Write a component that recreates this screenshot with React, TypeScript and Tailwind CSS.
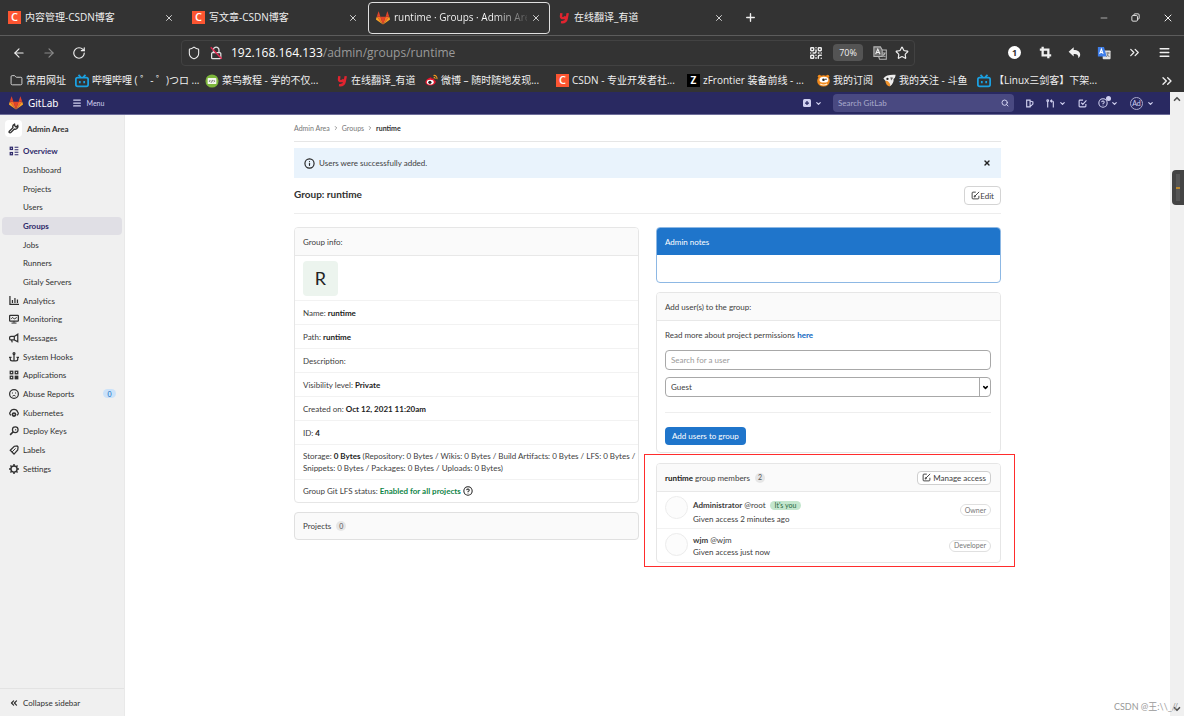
import type { ReactNode } from 'react'
import {
  ArrowLeft,
  ArrowRight,
  ChevronDown,
  ChevronRight,
  ChevronUp,
  ChevronsLeft,
  ChevronsRight,
  CircleHelp,
  Folder,
  Info,
  Menu,
  Minus,
  Plus,
  QrCode,
  RotateCw,
  Search,
  Shield,
  Star,
  X,
} from 'lucide-react'

/* ---------- icons ---------- */

interface IconProps {
  className?: string
}

function Svg({ className = 'size-[10px]', children }: IconProps & { children: ReactNode }) {
  return (
    <svg
      viewBox="0 0 16 16"
      className={`shrink-0 ${className}`}
      fill="none"
      stroke="currentColor"
      strokeWidth="2"
      aria-hidden="true"
    >
      {children}
    </svg>
  )
}

function TanukiIcon({ className }: IconProps) {
  return (
    <svg viewBox="0 0 36 34" className={`shrink-0 ${className}`} aria-hidden="true">
      <path fill="#e24329" d="M18 34 24.600 13.500H11.400z" />
      <path fill="#fc6d26" d="M18 34 11.400 13.500H2z" />
      <path fill="#fca326" d="M2 13.500.1 19.700a1.400 1.400 0 0 0 .5 1.500L18 34z" />
      <path fill="#e24329" d="M2 13.500h9.400L7.400 1c-.2-.6-1.100-.6-1.300 0z" />
      <path fill="#fc6d26" d="M18 34 24.600 13.500H34z" />
      <path fill="#fca326" d="m34 13.500 1.900 6.200a1.400 1.400 0 0 1-.5 1.500L18 34z" />
      <path fill="#e24329" d="M34 13.500h-9.400L28.600 1c.2-.6 1.100-.6 1.300 0z" />
    </svg>
  )
}

function BiliIcon() {
  return (
    <svg viewBox="0 0 16 16" className="size-[14px] shrink-0" fill="none" stroke="#1ba1e2" strokeWidth="2" aria-hidden="true">
      <rect x="1" y="4" width="14" height="10" rx="2" />
      <path d="m4 1 2.500 2.500M12 1 9.500 3.500M5.500 8v2.500M10.500 8v2.500" />
    </svg>
  )
}

function CsdnIcon() {
  return (
    <span className="flex size-[13px] shrink-0 items-center justify-center bg-[#fc5531] text-[11px] font-semibold text-white">
      C
    </span>
  )
}

function YoudaoIcon() {
  return (
    <svg viewBox="0 0 16 16" className="size-[12px] shrink-0" fill="none" stroke="#e0242f" strokeWidth="3.200" aria-hidden="true">
      <path d="M4.500 1.500 4 5.500c-.3 3.500 4.500 3.500 6.500.5M13 1.500 11.500 9c-.8 4-3.500 5-7.500 4.500" />
    </svg>
  )
}

function RunoobIcon() {
  return (
    <svg viewBox="0 0 16 16" className="size-[14px] shrink-0" aria-hidden="true">
      <circle cx="8" cy="8" r="7.500" fill="#7db73c" />
      <rect x="3" y="4.500" width="10" height="7" rx="1" fill="#f4f8ee" />
      <path d="M6 7 5 8.200l1 1.200M10 7l1 1.200-1 1.200M8.500 6.800l-1 3" stroke="#555" fill="none" />
    </svg>
  )
}

function WeiboIcon() {
  return (
    <svg viewBox="0 0 16 16" className="size-[13px] shrink-0" aria-hidden="true">
      <path fill="#e6162d" d="M6 4.500c1-.6 2.300-.4 2.200 1.300 1.800-.7 3.800-.3 3.200 1.600 1.500.5 2.100 1.500 1.800 2.700-.5 2.300-3.400 4-6.700 4S.5 12.600.5 10.200C.5 8 3.500 5.200 6 4.500z" />
      <ellipse cx="6.500" cy="10" rx="4.200" ry="3" fill="#fff" />
      <circle cx="6" cy="10.200" r="2" fill="#222" />
      <path d="M10.500 1.800c2.800-.5 4.800 1.700 4.200 4.500M10.700 4.200c1.200-.2 1.900.7 1.700 1.800" stroke="#f59a1b" strokeWidth="1.300" fill="none" />
    </svg>
  )
}

function SubscribeIcon() {
  return (
    <svg viewBox="0 0 16 16" className="size-[13px] shrink-0" aria-hidden="true">
      <circle cx="3" cy="2.800" r="2" fill="#f28a1c" />
      <circle cx="13" cy="2.800" r="2" fill="#f28a1c" />
      <ellipse cx="8" cy="8.500" rx="7.800" ry="7" fill="#f28a1c" />
      <ellipse cx="8.500" cy="7" rx="5.500" ry="3.600" fill="#fff" />
      <circle cx="8" cy="7" r="1.600" fill="#222" />
      <circle cx="11" cy="6.500" r="1" fill="#222" />
      <path d="M4 12.300c2.500 1.500 6 1.500 8.500 0" stroke="#fff3df" strokeWidth="1.400" fill="none" />
    </svg>
  )
}

function DouyuIcon() {
  return (
    <svg viewBox="0 0 16 16" className="size-[13px] shrink-0" aria-hidden="true">
      <path d="M.5 5.500C3 1.500 9 .5 15.500 1c-.5 2 0 3.500-2.500 5 .5 3-1 6.500-4.500 9C7.500 13 5 12 3.500 9z" fill="#eee" />
      <path d="M3 8.500c2-1 5 1 6 5l-1 2c-3-1-5-4-5-7z" fill="#f0932b" />
      <circle cx="5.500" cy="6" r="1.400" fill="#222" />
      <path d="m9 4 3.500.5L10 8z" fill="#666" />
    </svg>
  )
}

function InsecureLockIcon() {
  return (
    <svg viewBox="0 0 16 16" className="size-[14px] shrink-0" fill="none" stroke="#e4e4e4" strokeWidth="1.400" aria-hidden="true">
      <rect x="3" y="7.500" width="10.500" height="7" rx="1.200" />
      <path d="M5 7.500V4.500a3.200 3.200 0 0 1 6.400 0v3" />
      <path d="m2 1.500 12.500 13" stroke="#e22850" strokeWidth="1.600" />
    </svg>
  )
}

function TranslateIcon() {
  return (
    <svg viewBox="0 0 16 16" className="size-[14px] shrink-0" fill="none" aria-hidden="true">
      <rect x="6.500" y="5" width="9" height="10" rx="1" fill="#e2e2e2" />
      <path d="M1 1h7l3 11H1z" fill="#3f7ee8" />
      <path d="m3 9 2-5.500L7 9M3.600 7.300h2.800" stroke="#fff" strokeWidth="1.200" />
      <path d="M10.500 8h4M12.500 7v1.200c0 2-1 3.500-2 4.300M11.500 9.500l2.500 3" stroke="#666" strokeWidth=".9" />
    </svg>
  )
}

function PageTranslateIcon() {
  return (
    <svg viewBox="0 0 16 16" className="size-[14px] shrink-0" fill="none" stroke="#b8b8b8" strokeWidth="1.200" aria-hidden="true">
      <path d="M1 1h7.500l2 3.500V12H1z" fill="#6a6a6a" />
      <path d="M10.500 4.500h4.700v10.700H7.500L6.500 12" />
      <path d="m3 9.500 2.500-6L8 9.500M4 7.500h3" stroke="#f0f0f0" />
      <path d="M11 8h3.500M13.500 8c-.3 2-1.300 3.500-2.500 4.500M11.500 9.500l2.500 3" />
    </svg>
  )
}

function CropIcon() {
  return (
    <Svg className="size-[13px]">
      <path d="M4.500 1v10.500H15M1 4.500h10.500V15" strokeWidth="2.800" />
    </Svg>
  )
}

function ReplyIcon() {
  return (
    <svg viewBox="0 0 16 16" className="size-[13px] shrink-0" fill="currentColor" aria-hidden="true">
      <path d="M7 1.500v3.300c5 0 8 2.500 8 5.700 0 2-1 3.600-2.500 4.500.8-3.500-1-5.300-5.500-5.300V13L.8 7.200z" />
    </svg>
  )
}

function RestoreIcon() {
  return (
    <Svg className="size-[9px]">
      <rect x="1.500" y="4.500" width="10" height="10" rx="2" strokeWidth="1.600" />
      <path d="M5 4V3.500a2 2 0 0 1 2-2h5.500a2 2 0 0 1 2 2V9a2 2 0 0 1-2 2" strokeWidth="1.600" />
    </Svg>
  )
}

function EditIcon({ className }: IconProps) {
  return (
    <Svg className={className}>
      <path d="M8.500 2H3.500A1.500 1.500 0 0 0 2 3.500v9A1.500 1.500 0 0 0 3.500 14h9a1.500 1.500 0 0 0 1.500-1.500V8.500" strokeWidth="1.700" />
      <path d="M6.500 9.500 14.500 1.500M5.500 10.800l.8-2.600 1.700 1.700z" strokeWidth="1.700" />
    </Svg>
  )
}

function WrenchIcon() {
  return (
    <Svg className="size-[11px]">
      <path d="M9.500 1.800a4 4 0 0 0-2.300 5L2 12a1.300 1.300 0 0 0 2 2l5.200-5.200a4 4 0 0 0 5-5L11.800 6l-1.800-1.800z" />
    </Svg>
  )
}

function OverviewIcon() {
  return (
    <Svg>
      <rect x="2" y="2" width="3.500" height="3.500" />
      <rect x="2" y="10.500" width="3.500" height="3.500" />
      <path d="M9 2h6M9 6h6M9 10h6M9 14h6" strokeWidth="1.800" />
    </Svg>
  )
}

function ChartIcon() {
  return (
    <Svg>
      <path d="M1.500 0v13.500H16M5.500 6.500V11M9.500 3v8M13.500 5.500V11" />
    </Svg>
  )
}

function MonitorIcon() {
  return (
    <Svg>
      <rect x="1" y="2" width="14" height="9.500" rx="1" />
      <path d="M8 11v3M4 14.500h8M3.500 7.500 6 5.500 8.500 8 12.500 5.500" strokeWidth="1.600" />
    </Svg>
  )
}

function BullhornIcon() {
  return (
    <Svg>
      <path d="M14 2v12L8.500 11H3a2 2 0 0 1-2-2V7.500a2 2 0 0 1 2-2h5.500zM8.500 5.500V11M4 11l1.200 4" />
    </Svg>
  )
}

function HookIcon() {
  return (
    <Svg>
      <circle cx="8" cy="2.500" r="1.500" />
      <path d="M8 4v10M2 8.500V11a3 3 0 0 0 3 3h6a3 3 0 0 0 3-3V8.500M4 8.500H0M16 8.500h-4" />
    </Svg>
  )
}

function ApplicationsIcon() {
  return (
    <Svg>
      <rect x="2" y="2" width="4" height="4" />
      <rect x="10" y="2" width="4" height="4" />
      <rect x="2" y="10" width="4" height="4" />
      <rect x="10" y="10" width="4" height="4" fill="currentColor" />
    </Svg>
  )
}

function FrownIcon() {
  return (
    <Svg>
      <circle cx="8" cy="8" r="7" />
      <path d="M5.500 5.500v1.800M10.500 5.500v1.800M5.500 11.500c1-1.600 4-1.600 5 0" strokeWidth="1.500" />
    </Svg>
  )
}

function CloudGearIcon() {
  return (
    <Svg>
      <path d="M3.500 11.500A3 3 0 0 1 2 6.500C3 3.500 5 2 8 2s5 1.500 6 4.500a3 3 0 0 1-1.500 5" />
      <circle cx="8" cy="10.500" r="2.500" strokeWidth="2.600" />
    </Svg>
  )
}

function KeyIcon() {
  return (
    <Svg>
      <circle cx="10" cy="6" r="4.500" />
      <path d="m6.800 9.200-5 5M10 6h1.500" strokeWidth="2.600" />
    </Svg>
  )
}

function LabelsIcon() {
  return (
    <Svg>
      <path d="m8.500 2 4.500-.5 1.500 1.500-.5 5-6 6.500L2 8.500z" />
      <path d="M10.500 5.500 5 11" strokeWidth="1.500" />
    </Svg>
  )
}

function GearIcon() {
  return (
    <Svg>
      <circle cx="8" cy="8" r="5" strokeWidth="2.400" />
      <path d="M8 0v3M8 13v3M0 8h3M13 8h3M2.300 2.300l2 2M11.700 11.700l2 2M2.300 13.700l2-2M11.700 4.300l2-2" strokeWidth="2.400" />
    </Svg>
  )
}

function IssuesIcon() {
  return (
    <Svg className="size-[9px]">
      <path d="M3 2h6v12H3zM9 3.500 14 5v4l-4.500 4" />
    </Svg>
  )
}

function MergeIcon() {
  return (
    <Svg className="size-[9px]">
      <path d="M3 4v11M8.500 3.500H11a2 2 0 0 1 2 2V15M10.500 1 8 3.500 10.500 6" />
      <circle cx="3" cy="3" r="1.500" />
    </Svg>
  )
}

function TodoIcon() {
  return (
    <Svg className="size-[9px]">
      <path d="M9 2H3.500A1.500 1.500 0 0 0 2 3.500v9A1.500 1.500 0 0 0 3.500 14h9a1.500 1.500 0 0 0 1.500-1.500V9M5.500 6.500 8.500 9.500 15 2.500" />
    </Svg>
  )
}

/* ---------- browser chrome ---------- */

interface Tab {
  title: string
  icon: ReactNode
  active?: boolean
}

const tabs: Tab[] = [
  { title: '内容管理-CSDN博客', icon: <CsdnIcon /> },
  { title: '写文章-CSDN博客', icon: <CsdnIcon /> },
  { title: 'runtime · Groups · Admin Are', icon: <TanukiIcon className="size-[14px]" />, active: true },
  { title: '在线翻译_有道', icon: <YoudaoIcon /> },
]

const bookmarks: { title: string; icon: ReactNode; width: string }[] = [
  { title: '常用网址', icon: <Folder className="size-[13px] shrink-0" strokeWidth={1.5} />, width: 'w-[65px]' },
  { title: '哔哩哔哩 ( ゜- ゜)つロ ...', icon: <BiliIcon />, width: 'w-[130px]' },
  { title: '菜鸟教程 - 学的不仅...', icon: <RunoobIcon />, width: 'w-[131px]' },
  { title: '在线翻译_有道', icon: <YoudaoIcon />, width: 'w-[89px]' },
  { title: '微博 – 随时随地发现...', icon: <WeiboIcon />, width: 'w-[131px]' },
  { title: 'CSDN - 专业开发者社...', icon: <CsdnIcon />, width: 'w-[131px]' },
  {
    title: 'zFrontier 装备前线 - ...',
    icon: (
      <span className="flex size-[13px] shrink-0 items-center justify-center bg-black text-[10px] font-bold text-white">Z</span>
    ),
    width: 'w-[130px]',
  },
  { title: '我的订阅', icon: <SubscribeIcon />, width: 'w-[66px]' },
  { title: '我的关注 - 斗鱼', icon: <DouyuIcon />, width: 'w-[94px]' },
  { title: '【Linux三剑客】下架...', icon: <BiliIcon />, width: 'w-[130px]' },
]

function TabStrip() {
  return (
    <div className="flex h-[36px] items-center border-b border-[#5c5c5c]">
      {tabs.map((tab) => (
        <div
          key={tab.title}
          className={`flex h-[32px] shrink-0 items-center gap-1 rounded border pl-[7px] ${
            tab.active ? 'w-[182px] border-[#e0e0e0] pr-2' : 'w-[184px] border-transparent pr-[9px]'
          }`}
        >
          {tab.icon}
          <span
            className={`min-w-0 flex-1 whitespace-nowrap text-[10px] ${
              tab.active ? 'bg-gradient-to-r from-white from-75% to-[#555] bg-clip-text text-transparent' : ''
            }`}
          >
            {tab.title}
          </span>
          <button type="button" aria-label="Close tab">
            <X className="size-[10px]" strokeWidth={2} />
          </button>
        </div>
      ))}
      <button type="button" aria-label="New tab" className="ml-[10px]">
        <Plus className="size-[13px]" strokeWidth={2.5} />
      </button>
      <div className="ml-auto flex items-center gap-[22px] pr-[10px]">
        <button type="button" aria-label="Minimize">
          <Minus className="size-[10px]" strokeWidth={1.5} />
        </button>
        <button type="button" aria-label="Restore">
          <RestoreIcon />
        </button>
        <button type="button" aria-label="Close window">
          <X className="size-[12px]" strokeWidth={2} />
        </button>
      </div>
    </div>
  )
}

function AddressBar() {
  return (
    <div className="flex h-[33px] items-center pl-3">
      <div className="flex w-[169px] shrink-0 items-center gap-4">
        <button type="button" aria-label="Back">
          <ArrowLeft className="size-[14px]" />
        </button>
        <button type="button" aria-label="Forward" className="text-[#8a8a8a]">
          <ArrowRight className="size-[14px]" />
        </button>
        <button type="button" aria-label="Reload">
          <RotateCw className="size-[14px]" />
        </button>
      </div>
      <div className="flex h-[26px] w-[734px] items-center gap-2 rounded border border-[#424242] px-[5px]">
        <Shield className="size-[14px]" strokeWidth={1.8} />
        <InsecureLockIcon />
        <div className="flex-1 text-[12px] text-[#9a9a9a]">
          <span className="text-white">192.168.164.133</span>/admin/groups/runtime
        </div>
        <QrCode className="size-[14px]" strokeWidth={2.5} />
        <button type="button" className="ml-[2px] h-[17px] w-[30px] rounded bg-[#545454] text-[9px]">
          70%
        </button>
        <span className="ml-[2px] flex items-center">
          <PageTranslateIcon />
        </span>
        <Star className="size-[14px]" />
      </div>
      <div className="ml-auto flex items-center gap-4 pr-[13px]">
        <span className="flex size-[13px] items-center justify-center rounded-full bg-white text-[9px] font-bold text-[#333]">1</span>
        <span className="ml-[2px]">
          <CropIcon />
        </span>
        <ReplyIcon />
        <TranslateIcon />
        <ChevronsRight className="size-[15px]" />
        <Menu className="size-[13px]" strokeWidth={2.5} />
      </div>
    </div>
  )
}

function BookmarksBar() {
  return (
    <div className="flex h-[23px] items-center pl-[10px]">
      {bookmarks.map((item) => (
        <a
          key={item.title}
          href="#"
          className={`flex shrink-0 items-center gap-[3px] whitespace-nowrap text-[10px] ${item.width}`}
        >
          {item.icon}
          {item.title}
        </a>
      ))}
      <button type="button" aria-label="More bookmarks" className="ml-auto pr-[9px]">
        <ChevronsRight className="size-[16px]" />
      </button>
    </div>
  )
}

/* ---------- gitlab ---------- */

function Navbar() {
  return (
    <header className="flex h-[23px] items-center border-b border-[#6d6d99] bg-[#292961] pl-[9px] pr-4 text-[#d1d1f0]">
      <a href="#" className="flex items-center gap-[5px] font-['Noto_Sans',sans-serif] text-[10px] text-white">
        <TanukiIcon className="size-[14px]" />
        GitLab
      </a>
      <button type="button" className="ml-[14px] flex items-center gap-1 text-[7px]">
        <Menu className="size-[10px]" strokeWidth={3} />
        Menu
      </button>
      <div className="ml-auto flex items-center">
        <button type="button" aria-label="Create new" className="flex items-center gap-1">
          <svg viewBox="0 0 16 16" className="size-[8px]" aria-hidden="true">
            <rect width="16" height="16" rx="3" fill="currentColor" />
            <path d="M8 4v8M4 8h8" stroke="#292961" strokeWidth="2.500" />
          </svg>
          <ChevronDown className="size-[7px]" strokeWidth={4} />
        </button>
        <label className="ml-[11px] flex h-[18px] w-[181px] items-center rounded-sm bg-[#494981] px-[5px]">
          <input
            type="text"
            aria-label="Search GitLab"
            placeholder="Search GitLab"
            className="min-w-0 flex-1 bg-transparent text-[8px] outline-none placeholder:text-[#a9a9cc]"
          />
          <Search className="size-[8px]" strokeWidth={3} />
        </label>
        <button type="button" aria-label="Issues" className="ml-[11px]">
          <IssuesIcon />
        </button>
        <button type="button" aria-label="Merge requests" className="ml-[12px] flex items-center gap-1">
          <MergeIcon />
          <ChevronDown className="size-[7px]" strokeWidth={4} />
        </button>
        <button type="button" aria-label="To-do list" className="ml-[12px]">
          <TodoIcon />
        </button>
        <button type="button" aria-label="Help" className="relative ml-[11px] flex items-center gap-[3px]">
          <CircleHelp className="size-[10px]" strokeWidth={2.5} />
          <span className="absolute -top-0.5 left-2 size-[5px] rounded-full bg-[#d1d1f0]" />
          <ChevronDown className="size-[7px]" strokeWidth={4} />
        </button>
        <button type="button" aria-label="Account" className="ml-[12px] flex items-center gap-1">
          <span className="flex size-[13px] items-center justify-center rounded-full border border-[#a9a9cc] text-[7px]">Ad</span>
          <ChevronDown className="size-[7px]" strokeWidth={4} />
        </button>
      </div>
    </header>
  )
}

const navItems: { label: string; icon?: ReactNode; active?: boolean; count?: number }[] = [
  { label: 'Overview', icon: <OverviewIcon />, active: true },
  { label: 'Dashboard' },
  { label: 'Projects' },
  { label: 'Users' },
  { label: 'Groups', active: true },
  { label: 'Jobs' },
  { label: 'Runners' },
  { label: 'Gitaly Servers' },
  { label: 'Analytics', icon: <ChartIcon /> },
  { label: 'Monitoring', icon: <MonitorIcon /> },
  { label: 'Messages', icon: <BullhornIcon /> },
  { label: 'System Hooks', icon: <HookIcon /> },
  { label: 'Applications', icon: <ApplicationsIcon /> },
  { label: 'Abuse Reports', icon: <FrownIcon />, count: 0 },
  { label: 'Kubernetes', icon: <CloudGearIcon /> },
  { label: 'Deploy Keys', icon: <KeyIcon /> },
  { label: 'Labels', icon: <LabelsIcon /> },
  { label: 'Settings', icon: <GearIcon /> },
]

function Sidebar() {
  return (
    <aside className="flex w-[125px] shrink-0 flex-col border-r border-[#e9e9e9] bg-[#f0f0f0] text-[8px] text-[#303030]">
      <div className="flex h-[27px] items-center gap-[5px] pl-[5px] font-bold">
        <span className="flex size-[17px] items-center justify-center rounded-sm bg-white">
          <WrenchIcon />
        </span>
        Admin Area
      </div>
      <nav className="grid h-[336px] auto-rows-fr px-[2px]">
        {navItems.map((item) => (
          <a
            key={item.label}
            href="#"
            className={`flex items-center rounded-sm pr-[6px] ${item.icon ? 'gap-[4px] pl-[7px]' : 'pl-[21px]'} ${
              item.active ? 'font-bold text-[#2f2a6b]' : ''
            } ${item.active && !item.icon ? 'bg-[#e0dfe5]' : ''}`}
          >
            {item.icon}
            {item.label}
            {item.count !== undefined && (
              <span className="ml-auto flex h-[9px] w-[13px] items-center justify-center rounded-full bg-[#cbe2f9] text-[7px] text-[#1068bf]">
                {item.count}
              </span>
            )}
          </a>
        ))}
      </nav>
      <button type="button" className="mt-auto flex h-[28px] items-center gap-1 border-t border-[#e3e3e3] pl-[9px]">
        <ChevronsLeft className="size-[10px]" strokeWidth={3} />
        Collapse sidebar
      </button>
    </aside>
  )
}

function Card({ className = '', children }: { className?: string; children: ReactNode }) {
  return <section className={`overflow-hidden rounded-sm border border-[#e6e6e6] bg-white ${className}`}>{children}</section>
}

function CardHeader({ children }: { children: ReactNode }) {
  return (
    <div className="flex h-[28px] items-center border-b border-[#e8e8e8] bg-[#fafafa] pl-[8px] pr-[9px]">{children}</div>
  )
}

function CountBadge({ children }: { children: ReactNode }) {
  return (
    <span className="ml-[5px] flex size-[10px] items-center justify-center rounded-full bg-[#e6e6e6] text-[7px] text-[#555]">
      {children}
    </span>
  )
}

const details = [
  ['Name:', 'runtime'],
  ['Path:', 'runtime'],
  ['Description:', ''],
  ['Visibility level:', 'Private'],
  ['Created on:', 'Oct 12, 2021 11:20am'],
  ['ID:', '4'],
]

function GroupInfo() {
  return (
    <Card>
      <CardHeader>Group info:</CardHeader>
      <ul className="divide-y divide-[#f2f2f2]">
        <li className="flex h-[45px] items-center px-[8px]">
          <span className="flex size-[35px] items-center justify-center rounded bg-[#ecf4ee] text-[18px] text-[#222]">R</span>
        </li>
        {details.map(([label, value]) => (
          <li key={label} className="flex h-[24px] items-center gap-[2px] px-[8px]">
            {label} <strong className="text-[#222]">{value}</strong>
          </li>
        ))}
        <li className="py-[5px] pl-[8px] leading-[12px]">
          Storage: <strong className="text-[#222]">0 Bytes</strong> (Repository: 0 Bytes / Wikis: 0 Bytes / Build Artifacts: 0 Bytes / LFS: 0
          Bytes / Snippets: 0 Bytes / Packages: 0 Bytes / Uploads: 0 Bytes)
        </li>
        <li className="flex h-[22px] items-center gap-[2px] px-[8px]">
          Group Git LFS status: <strong className="text-[#108548]">Enabled for all projects</strong>
          <CircleHelp className="size-[10px] text-[#222]" strokeWidth={2.5} />
        </li>
      </ul>
    </Card>
  )
}

function AddUsers() {
  return (
    <Card className="mt-[9px]">
      <CardHeader>Add user(s) to the group:</CardHeader>
      <form className="pb-[7px] pl-[8px] pr-[9px] pt-[8px]">
        <p className="leading-[12px]">
          Read more about project permissions{' '}
          <a href="#" className="font-bold text-[#1068bf]">
            here
          </a>
        </p>
        <input
          type="text"
          aria-label="Search for a user"
          placeholder="Search for a user"
          className="mt-[9px] block h-[20px] w-full rounded-sm border border-[#a8a8a8] px-[5px] placeholder:text-[#999]"
        />
        <div className="relative mt-[7px]">
          <select
            aria-label="Role"
            className="block h-[20px] w-full appearance-none rounded-sm border border-[#a8a8a8] bg-white px-[5px]"
          >
            <option>Guest</option>
          </select>
          <span className="pointer-events-none absolute inset-y-0 right-0 flex w-[12px] items-center justify-center border-l border-[#a8a8a8] text-black">
            <ChevronDown className="size-[7px]" strokeWidth={5} />
          </span>
        </div>
        <hr className="mb-[14px] mt-[15px] border-[#eee]" />
        <button type="button" className="h-[18px] rounded-sm bg-[#1f75cb] px-[7px] text-white">
          Add users to group
        </button>
      </form>
    </Card>
  )
}

const members = [
  { name: 'Administrator', handle: '@root', access: 'Given access 2 minutes ago', role: 'Owner', self: true },
  { name: 'wjm', handle: '@wjm', access: 'Given access just now', role: 'Developer', self: false },
]

function Members() {
  return (
    <div className="relative mt-[10px]">
      <Card>
        <CardHeader>
          <strong className="mr-[2px] text-[#222]">runtime</strong> group members <CountBadge>2</CountBadge>
          <button
            type="button"
            className="ml-auto flex h-[14px] items-center gap-[2px] rounded-sm border border-[#cfcfcf] bg-white px-1"
          >
            <EditIcon className="size-[9px]" />
            Manage access
          </button>
        </CardHeader>
        <ul className="divide-y divide-[#f2f2f2]">
          {members.map((member) => (
            <li key={member.name} className={`flex items-center pl-[8px] pr-[9px] ${member.self ? 'h-[37px]' : 'h-[33px]'}`}>
              <span className="mt-[4px] size-[23px] self-start rounded-full border border-[#ececec] bg-[#fcfcfc]" />
              <div className={`ml-[5px] ${member.self ? 'pt-[4px] leading-[14px]' : 'leading-[12px]'}`}>
                <div className="flex items-center gap-[2px]">
                  <strong>{member.name}</strong> {member.handle}
                  {member.self && (
                    <span className="ml-[2px] flex h-[9px] items-center rounded-full bg-[#c3e6cd] px-[5px] text-[7px] text-[#24663b]">
                      It's you
                    </span>
                  )}
                </div>
                <div>{member.access}</div>
              </div>
              <span className="ml-auto flex h-[12px] items-center rounded-full border border-[#e0e0e0] px-1 text-[7px] text-[#777]">
                {member.role}
              </span>
            </li>
          ))}
        </ul>
      </Card>
      <div className="pointer-events-none absolute -bottom-1 -left-3 -right-[14px] -top-[9px] border border-[#ff2c2c]" />
    </div>
  )
}

function Content() {
  return (
    <main className="min-w-0 flex-1 bg-white text-[8px] text-[#404040]">
      <div className="mx-auto max-w-[707px]">
        <nav className="flex h-[27px] items-center gap-[3px] border-b border-[#e6e6e6] text-[7px] text-[#777]">
          <a href="#">Admin Area</a>
          <ChevronRight className="size-[6px]" strokeWidth={3} />
          <a href="#">Groups</a>
          <ChevronRight className="size-[6px]" strokeWidth={3} />
          <a href="#" className="font-bold text-[#303030]">
            runtime
          </a>
        </nav>
        <div role="status" className="mt-[6px] flex h-[30px] items-center gap-1 bg-[#e9f3fc] px-[10px]">
          <Info className="size-[11px] text-[#222]" strokeWidth={2.5} />
          Users were successfully added.
          <button type="button" aria-label="Dismiss" className="ml-auto text-[#222]">
            <X className="size-[8px]" strokeWidth={4} />
          </button>
        </div>
        <div className="flex h-[36px] items-center border-b border-[#ededed]">
          <h1 className="pb-[3px] text-[10px] font-bold text-[#303030]">Group: runtime</h1>
          <button type="button" className="ml-auto flex h-[19px] items-center rounded-sm border border-[#d4d4d4] px-[6px]">
            <EditIcon className="size-[9px]" />
            Edit
          </button>
        </div>
        <div className="mt-[13px] grid grid-cols-2 items-start gap-[17px]">
          <div>
            <GroupInfo />
            <section className="mt-[9px] flex h-[28px] items-center rounded-sm border border-[#e0e0e0] bg-[#fafafa] pl-[8px]">
              Projects <CountBadge>0</CountBadge>
            </section>
          </div>
          <div>
            <section className="overflow-hidden rounded-sm border border-[#8db8e4]">
              <div className="flex h-[27px] items-center bg-[#1f75cb] pl-[8px] text-white">Admin notes</div>
              <div className="h-[27px]" />
            </section>
            <AddUsers />
            <Members />
          </div>
        </div>
      </div>
    </main>
  )
}

function Scrollbar() {
  return (
    <div className="relative flex w-[14px] shrink-0 flex-col items-center justify-between bg-[#f0f0f0] py-[2px] text-[#505050]">
      <ChevronUp className="size-[10px]" strokeWidth={4} />
      <ChevronDown className="size-[10px]" strokeWidth={4} />
      <div className="absolute right-0 top-[78px] flex h-[35px] w-[12px] items-center justify-center rounded-l-sm bg-[#444]">
        <div className="flex h-[27px] w-1 items-center bg-[#555]">
          <span className="h-[2px] w-full bg-[#b8862f]" />
        </div>
      </div>
      <span className="absolute bottom-[3px] right-[6px] whitespace-nowrap text-[9px] text-[#999]">CSDN @王:\\_//</span>
    </div>
  )
}

export default function App() {
  return (
    <div className="flex h-screen flex-col overflow-hidden bg-[#333]">
      <div className="font-['Open_Sans','Noto_Sans_CJK_SC',sans-serif] text-[#f0f0f0]">
        <TabStrip />
        <AddressBar />
        <BookmarksBar />
      </div>
      <div className="flex min-h-0 flex-1 font-['Lato','Noto_Sans_CJK_SC',sans-serif]">
        <div className="flex min-w-0 flex-1 flex-col">
          <Navbar />
          <div className="flex min-h-0 flex-1">
            <Sidebar />
            <Content />
          </div>
        </div>
        <Scrollbar />
      </div>
    </div>
  )
}
